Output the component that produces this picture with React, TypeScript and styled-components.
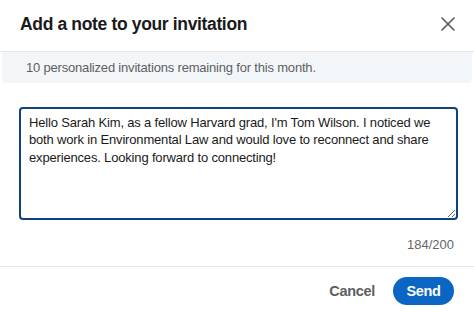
import React from "react";
import styled, { createGlobalStyle } from "styled-components";

const Global = createGlobalStyle`
  html, body { margin: 0; padding: 0; background: #ffffff; }
  body { font-family: "Liberation Sans", Arial, sans-serif; -webkit-font-smoothing: antialiased; }
  * { box-sizing: border-box; }
`;

const Modal = styled.div`
  width: 474px;
  height: 313px;
  background: #ffffff;
  display: flex;
  flex-direction: column;
  overflow: hidden;
`;

const Header = styled.header`
  height: 52px;
  display: flex;
  align-items: center;
  justify-content: space-between;
  padding: 0 14px 3px 20px;
  border-bottom: 1px solid #e6e6e6;
`;

const Title = styled.h2`
  margin: 0;
  font-size: 17.5px;
  font-weight: 700;
  color: #1a1a1a;
  letter-spacing: -0.35px;
`;

const CloseButton = styled.button`
  width: 24px;
  height: 24px;
  padding: 0;
  border: none;
  background: transparent;
  display: flex;
  align-items: center;
  justify-content: center;
  color: #575757;
  cursor: pointer;
`;

const Banner = styled.div`
  height: 31px;
  margin: 0 2px;
  background: #f3f6f9;
  border-radius: 0 0 4px 4px;
  display: flex;
  align-items: center;
  padding: 0 0 0 24px;
  font-size: 13px;
  letter-spacing: -0.19px;
  color: #5f5f5f;
`;

const Body = styled.div`
  padding: 24px 16px 0 19px;
  display: flex;
  flex-direction: column;
`;

const NoteArea = styled.textarea`
  width: 100%;
  height: 113px;
  border: 2px solid #0d437f;
  border-radius: 4px;
  padding: 5px 8px;
  font-family: "Liberation Sans", Arial, sans-serif;
  font-size: 13px;
  letter-spacing: -0.17px;
  line-height: 17.3px;
  color: #1a1a1a;
  resize: vertical;
  outline: none;
`;

const Counter = styled.div`
  align-self: flex-end;
  margin: 17px 4px 0 0;
  font-size: 13px;
  color: #666666;
`;

const Footer = styled.footer`
  margin-top: 14px;
  border-top: 1px solid #e8e8e8;
  display: flex;
  justify-content: flex-end;
  align-items: center;
  gap: 18px;
  padding: 10px 20px 0 0;
`;

const TextButton = styled.button`
  border: none;
  background: transparent;
  font-family: "Liberation Sans", Arial, sans-serif;
  font-size: 14.5px;
  font-weight: 700;
  letter-spacing: -0.3px;
  color: #5e5e5e;
  padding: 0;
  cursor: pointer;
`;

const PrimaryButton = styled.button`
  height: 28px;
  width: 61px;
  border: none;
  border-radius: 14px;
  background: #0a66c2;
  color: #ffffff;
  font-family: "Liberation Sans", Arial, sans-serif;
  font-size: 14.5px;
  font-weight: 700;
  letter-spacing: -0.3px;
  cursor: pointer;
`;

const note =
  "Hello Sarah Kim, as a fellow Harvard grad, I'm Tom Wilson. I noticed we both work in Environmental Law and would love to reconnect and share experiences. Looking forward to connecting!";

export default function App() {
  return (
    <>
      <Global />
      <Modal>
        <Header>
          <Title>Add a note to your invitation</Title>
          <CloseButton aria-label="Dismiss">
            <svg width="14" height="14" viewBox="0 0 14 14" fill="none">
              <path d="M1 1 L13 13 M13 1 L1 13" stroke="currentColor" strokeWidth="1.6" strokeLinecap="round" />
            </svg>
          </CloseButton>
        </Header>
        <Banner>10 personalized invitations remaining for this month.</Banner>
        <Body>
          <NoteArea defaultValue={note} />
          <Counter>184/200</Counter>
        </Body>
        <Footer>
          <TextButton>Cancel</TextButton>
          <PrimaryButton>Send</PrimaryButton>
        </Footer>
      </Modal>
    </>
  );
}
